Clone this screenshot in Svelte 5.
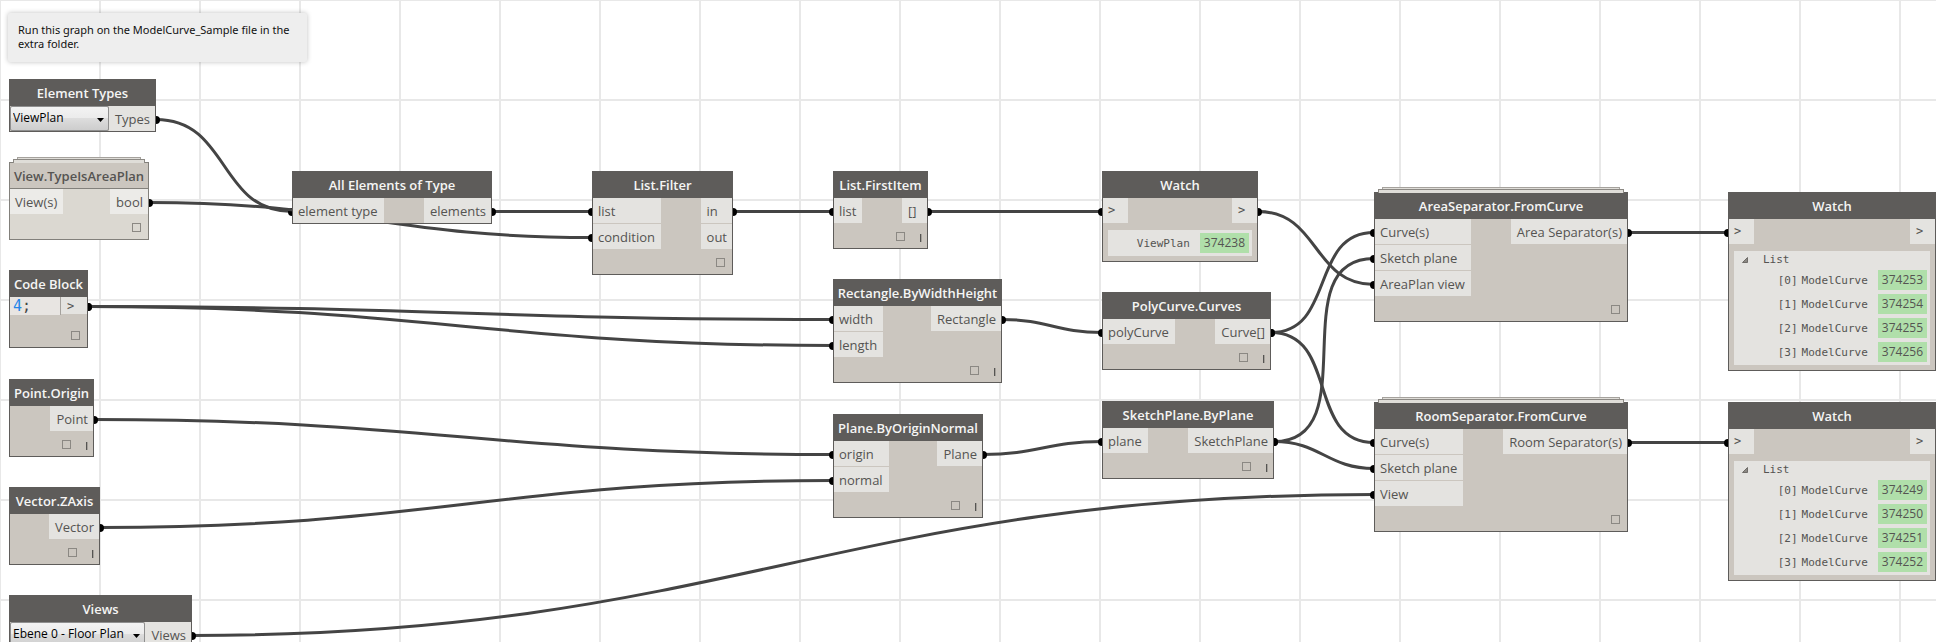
<script>
  const nodes = [
    { id: 'types', kind: 'select', x: 9, y: 79, w: 147, title: 'Element Types', value: 'ViewPlan', out: ['Types'] },
    { id: 'isArea', x: 9, y: 162, w: 140, title: 'View.TypeIsAreaPlan', in: ['View(s)'], out: ['bool'], footer: true, stacked: true, light: true },
    { id: 'code', kind: 'code', x: 9, y: 270, w: 79, title: 'Code Block', out: ['>'], footer: true },
    { id: 'origin', x: 9, y: 379, w: 85, title: 'Point.Origin', out: ['Point'], footer: true, lacing: true },
    { id: 'zaxis', x: 9, y: 487, w: 91, title: 'Vector.ZAxis', out: ['Vector'], footer: true, lacing: true },
    { id: 'views', kind: 'select', x: 9, y: 595, w: 183, title: 'Views', value: 'Ebene 0 - Floor Plan', out: ['Views'] },
    { id: 'all', x: 292, y: 171, w: 200, title: 'All Elements of Type', in: ['element type'], out: ['elements'] },
    { id: 'filter', x: 592, y: 171, w: 141, title: 'List.Filter', in: ['list', 'condition'], out: ['in', 'out'], footer: true },
    { id: 'first', x: 833, y: 171, w: 95, title: 'List.FirstItem', in: ['list'], out: ['[]'], footer: true, lacing: true },
    { id: 'rect', x: 833, y: 279, w: 169, title: 'Rectangle.ByWidthHeight', in: ['width', 'length'], out: ['Rectangle'], footer: true, lacing: true },
    { id: 'plane', x: 833, y: 414, w: 150, title: 'Plane.ByOriginNormal', in: ['origin', 'normal'], out: ['Plane'], footer: true, lacing: true },
    { id: 'watch', x: 1102, y: 171, w: 156, title: 'Watch', in: ['>'], out: ['>'], watch: { rows: [['', 'ViewPlan', '374238']] } },
    { id: 'poly', x: 1102, y: 292, w: 169, title: 'PolyCurve.Curves', in: ['polyCurve'], out: ['Curve[]'], footer: true, lacing: true },
    { id: 'sketch', x: 1102, y: 401, w: 172, title: 'SketchPlane.ByPlane', in: ['plane'], out: ['SketchPlane'], footer: true, lacing: true },
    { id: 'area', x: 1374, y: 192, w: 254, title: 'AreaSeparator.FromCurve', in: ['Curve(s)', 'Sketch plane', 'AreaPlan view'], out: ['Area Separator(s)'], footer: true, stacked: true },
    { id: 'room', x: 1374, y: 402, w: 254, title: 'RoomSeparator.FromCurve', in: ['Curve(s)', 'Sketch plane', 'View'], out: ['Room Separator(s)'], footer: true, stacked: true },
    { id: 'watchArea', x: 1728, y: 192, w: 208, title: 'Watch', in: ['>'], out: ['>'],
      watch: { list: 'List', rows: ['374253', '374254', '374255', '374256'].map((v, i) => [`[${i}]`, 'ModelCurve', v]) } },
    { id: 'watchRoom', x: 1728, y: 402, w: 208, title: 'Watch', in: ['>'], out: ['>'],
      watch: { list: 'List', rows: ['374249', '374250', '374251', '374252'].map((v, i) => [`[${i}]`, 'ModelCurve', v]) } }
  ];

  // [source node, target node, target port index]
  const links = [
    ['types', 'all', 0], ['isArea', 'filter', 1], ['all', 'filter', 0], ['filter', 'first', 0],
    ['first', 'watch', 0], ['code', 'rect', 0], ['code', 'rect', 1], ['origin', 'plane', 0],
    ['zaxis', 'plane', 1], ['rect', 'poly', 0], ['plane', 'sketch', 0], ['watch', 'area', 2],
    ['poly', 'area', 0], ['sketch', 'area', 1], ['poly', 'room', 0], ['sketch', 'room', 1],
    ['views', 'room', 2], ['area', 'watchArea', 0], ['room', 'watchRoom', 0]
  ];

  const byId = Object.fromEntries(nodes.map((n) => [n.id, n]));

  const wires = links.map(([from, to, port]) => {
    const a = byId[from];
    const b = byId[to];
    const x1 = a.x + a.w;
    const y1 = a.y + (a.kind === 'code' ? 36.5 : 40.5);
    const x2 = b.x;
    const y2 = b.y + 40.5 + port * 26;
    const bend = 0.45 * Math.hypot(x2 - x1, y2 - y1);
    return { x1, y1, x2, y2, d: `M${x1} ${y1}C${x1 + bend} ${y1} ${x2 - bend} ${y2} ${x2} ${y2}` };
  });
</script>

<main class="canvas">
  <svg class="wires" aria-hidden="true">
    {#each wires as w}
      <path d={w.d} />
      <circle cx={w.x1} cy={w.y1 + 0.5} r="4" />
      <circle cx={w.x2} cy={w.y2 + 0.5} r="4" />
    {/each}
  </svg>

  <aside class="note">Run this graph on the ModelCurve_Sample file in the extra folder.</aside>

  {#each nodes as n}
    <section class="node" class:light={n.light} style="left:{n.x}px;top:{n.y}px;width:{n.w}px">
      {#if n.stacked}
        <div class="sheet back"></div>
        <div class="sheet"></div>
      {/if}
      <h2>{n.title}</h2>
      <div class="body">
        <div class="row">
          {#if n.kind === 'select'}
            <div class="combo">
              <select aria-label={n.title}>
                <option>{n.value}</option>
              </select>
              <svg width="7" height="4" viewBox="0 0 7 4" aria-hidden="true"><path d="M0 0H7L3.5 4Z" /></svg>
            </div>
          {:else if n.kind === 'code'}
            <code><span>4</span>;</code>
          {:else}
            <div class="ports">
              {#each n.in ?? [] as p}<span class="port" class:chevron={p === '>'}>{p}</span>{/each}
            </div>
          {/if}
          <div class="ports outputs" class:short={n.kind === 'code'}>
            {#each n.out as p}<span class="port" class:chevron={p === '>'}>{p}</span>{/each}
          </div>
        </div>
        {#if n.watch}
          <div class="watch" class:tree={n.watch.list}>
            {#if n.watch.list}
              <div class="head">
                <button aria-label="Collapse list">
                  <svg width="6" height="6" viewBox="0 0 6 6"><path d="M5.5 0.5V5.5H0.5Z" /></svg>
                </button>
                {n.watch.list}
              </div>
            {/if}
            {#each n.watch.rows as [index, label, value]}
              <div class="item">
                {#if index}<span class="index">{index}</span>{/if}
                <span>{label}</span>
                <a href="#{value}">{value}</a>
              </div>
            {/each}
          </div>
        {/if}
        {#if n.footer}
          <footer>
            <input type="checkbox" aria-label="Preview {n.title}" />
            {#if n.lacing}<i class="lacing"></i>{/if}
          </footer>
        {/if}
      </div>
    </section>
  {/each}
</main>

<style>
  :global(body) {
    margin: 0;
  }

  .canvas {
    position: relative;
    height: 100vh;
    overflow: hidden;
    background-color: #fff;
    background-image:
      linear-gradient(#e8e8e8 2px, transparent 2px),
      linear-gradient(90deg, #e8e8e8 2px, transparent 2px);
    background-size: 100px 100px;
    background-position: -1px -1px;
    font-family: 'Open Sans', sans-serif;
    font-size: 13px;
    color: #555452;
  }

  .canvas * {
    box-sizing: border-box;
  }

  .wires {
    position: absolute;
    inset: 0;
    width: 100%;
    height: 100%;
  }

  .wires path {
    fill: none;
    stroke: #444;
    stroke-width: 3;
  }

  .wires circle {
    fill: #000;
  }

  .note {
    position: absolute;
    left: 8px;
    top: 13px;
    width: 299px;
    padding: 10px 8px 11px 10px;
    border-radius: 2px;
    background: #eee;
    box-shadow: 0 0 5px rgba(0, 0, 0, 0.25);
    color: #111;
    font-family: 'Noto Sans', sans-serif;
    font-size: 11px;
    line-height: 14px;
  }

  .node {
    position: absolute;
    border: 1px solid #5e5c5a;
    background: #cbc6bf;
  }

  .sheet {
    position: absolute;
    top: -4px;
    left: 3px;
    right: 3px;
    height: 4px;
    border: 1px solid #8c8984;
    border-bottom: 0;
    background: #dfddd8;
  }

  .sheet.back {
    top: -6px;
    left: 7px;
    right: 7px;
    border-color: #a5a29d;
  }

  h2 {
    margin: 0;
    height: 26px;
    background: #5e5c5a;
    color: #f5f5f4;
    font-size: 13px;
    font-weight: 600;
    line-height: 26px;
    text-align: center;
    white-space: nowrap;
  }

  .light {
    border-color: #82807b;
    background: #dbd8d1;
  }

  .light h2 {
    border-bottom: 1px solid #82807b;
    background: #cbc6bf;
    color: #555452;
  }

  .light .port {
    background: #ecebe8;
  }

  .row {
    display: flex;
    justify-content: space-between;
    align-items: flex-start;
    min-height: 25px;
  }

  .ports {
    display: flex;
    flex-direction: column;
    gap: 1px;
  }

  .port {
    min-width: 25px;
    height: 25px;
    padding: 0 6px 0 5px;
    background: #e4e3e0;
    line-height: 27px;
    white-space: nowrap;
  }

  .outputs .port {
    padding: 0 5px 0 6px;
  }

  .port.chevron {
    font-family: 'DejaVu Sans Mono', monospace;
    font-size: 12px;
    line-height: 25px;
  }

  .short .port.chevron {
    width: 26px;
    height: 17px;
    line-height: 18px;
  }

  footer {
    display: flex;
    justify-content: flex-end;
    gap: 15px;
    height: 25px;
    padding: 9px 7px;
  }

  footer:has(.lacing) {
    padding-right: 5px;
  }

  footer input {
    appearance: none;
    width: 9px;
    height: 9px;
    margin: 0;
    border: 1px solid #8b8883;
  }

  .lacing {
    width: 2px;
    height: 8px;
    margin-top: 2px;
    border-left: 1px solid #555452;
    background: #a5a19b;
  }

  .combo {
    position: relative;
    flex: 1;
    display: flex;
  }

  .combo select {
    appearance: none;
    width: 100%;
    height: 25px;
    padding: 0 0 2px 2px;
    border: 1px solid #8f8f8f;
    border-radius: 2px;
    background: linear-gradient(#f3f3f3, #ebebeb 50%, #dddddd 50%, #cdcdcd);
    color: #000;
    font-family: 'Open Sans', sans-serif;
    font-size: 12px;
  }

  .combo svg {
    position: absolute;
    right: 5px;
    top: 12px;
  }

  code {
    flex: 1;
    height: 18px;
    padding-left: 3px;
    border-right: 1px solid #a5a29d;
    background: #e8e5e2;
    color: #444;
    font-family: 'DejaVu Sans Mono', monospace;
    font-size: 15px;
    line-height: 18px;
  }

  code span {
    color: #2585e8;
  }

  .watch {
    margin: 7px 5px 5px;
    padding: 1px 3px 1px 0;
    background: #e4e3e0;
    font-family: 'DejaVu Sans Mono', monospace;
    font-size: 11px;
  }

  .watch.tree {
    padding-top: 0;
  }

  .head {
    display: flex;
    align-items: center;
    gap: 15px;
    height: 17px;
    padding-left: 8px;
  }

  .head button {
    display: flex;
    padding: 0;
    border: 0;
    background: none;
  }

  .head path {
    fill: #8b8883;
    stroke: #6f6c68;
  }

  .item {
    display: flex;
    justify-content: flex-end;
    align-items: center;
    height: 24px;
  }

  .index {
    margin-right: 4px;
  }

  .item a {
    margin-left: 10px;
    padding: 0 4px;
    background: #b0dfaa;
    color: #555452;
    font-family: 'Open Sans', sans-serif;
    font-size: 12px;
    line-height: 20px;
    text-decoration: none;
  }
</style>
